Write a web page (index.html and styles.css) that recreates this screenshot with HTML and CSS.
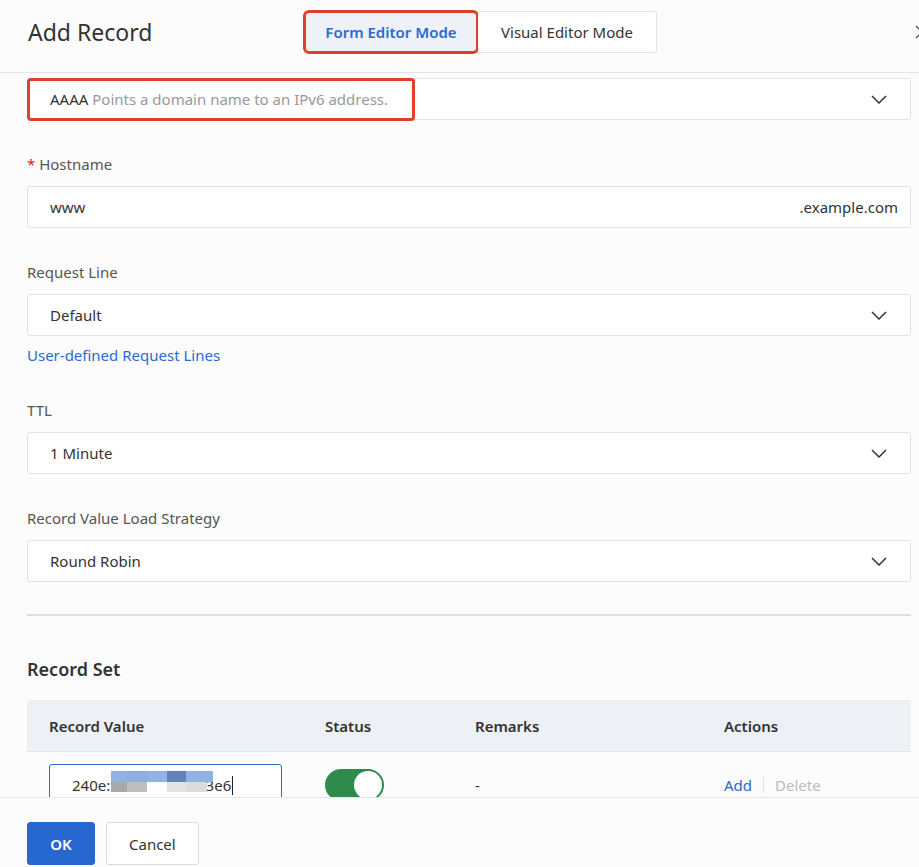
FILE: index.html
```html
<!DOCTYPE html>
<html lang="en">
<head>
  <meta charset="UTF-8">
  <meta name="viewport" content="width=device-width, initial-scale=1.0">
  <title>Add Record</title>
  <link rel="stylesheet" href="styles.css">
</head>
<body>

  <div class="dialog">
    <header class="dialog-head">
      <h1 class="dialog-title">Add Record</h1>
      <div class="mode-switch">
        <button class="mode-btn active">Form Editor Mode</button>
        <button class="mode-btn">Visual Editor Mode</button>
      </div>
      <button class="close-btn" aria-label="Close">
        <svg width="14" height="14" viewBox="0 0 14 14"><path d="M1 1 L13 13 M13 1 L1 13" stroke="#555" stroke-width="1.4" fill="none"/></svg>
      </button>
    </header>

    <div class="dialog-body">
      <div class="form">

        <div class="field">
          <div class="select">
            <span class="value">AAAA <span class="hint">Points a domain name to an IPv6 address.</span></span>
            <svg class="chevron" width="16" height="9" viewBox="0 0 16 9"><path d="M1 1 L8 8 L15 1" stroke="#333" stroke-width="1.5" fill="none"/></svg>
            <span class="mark"></span>
          </div>
        </div>

        <div class="field">
          <label class="label"><span class="req">*</span> Hostname</label>
          <div class="input">
            <span class="value">www</span>
            <span class="suffix">.example.com</span>
          </div>
        </div>

        <div class="field">
          <label class="label">Request Line</label>
          <div class="select">
            <span class="value">Default</span>
            <svg class="chevron" width="16" height="9" viewBox="0 0 16 9"><path d="M1 1 L8 8 L15 1" stroke="#333" stroke-width="1.5" fill="none"/></svg>
          </div>
          <a class="link" href="#">User-defined Request Lines</a>
        </div>

        <div class="field">
          <label class="label">TTL</label>
          <div class="select">
            <span class="value">1 Minute</span>
            <svg class="chevron" width="16" height="9" viewBox="0 0 16 9"><path d="M1 1 L8 8 L15 1" stroke="#333" stroke-width="1.5" fill="none"/></svg>
          </div>
        </div>

        <div class="field">
          <label class="label">Record Value Load Strategy</label>
          <div class="select">
            <span class="value">Round Robin</span>
            <svg class="chevron" width="16" height="9" viewBox="0 0 16 9"><path d="M1 1 L8 8 L15 1" stroke="#333" stroke-width="1.5" fill="none"/></svg>
          </div>
        </div>

        <hr class="divider">

        <h2 class="section-title">Record Set</h2>

        <div class="table">
          <div class="tr th">
            <div>Record Value</div>
            <div>Status</div>
            <div>Remarks</div>
            <div>Actions</div>
          </div>
          <div class="tr td">
            <div>
              <div class="input focused">
                <span class="value">240e:<span class="masked">xxxxxxxxxxxxx</span>3e6</span><span class="caret"></span>
                <span class="mosaic">
                  <span class="mosaic-row">
                    <i style="width:16px;background:#93b2e4"></i><i style="width:20px;background:#8fadde"></i><i style="width:20px;background:#93b2e4"></i><i style="width:19px;background:#6381b5"></i><i style="width:27px;background:#93b2e4"></i>
                  </span>
                  <span class="mosaic-row low">
                    <i style="width:16px;background:#a9a9a9"></i><i style="width:20px;background:#bdbdbd"></i><i style="width:20px;background:#fdfdfd"></i><i style="width:19px;background:#e3e3e3"></i><i style="width:21px;background:#dcdcdc"></i>
                  </span>
                </span>
              </div>
            </div>
            <div><span class="switch on"><span class="knob"></span></span></div>
            <div>-</div>
            <div class="actions"><a href="#" class="act">Add</a><span class="sep"></span><span class="act disabled">Delete</span></div>
          </div>
        </div>

      </div>
    </div>

    <footer class="dialog-foot">
      <button class="btn primary">OK</button>
      <button class="btn">Cancel</button>
    </footer>
  </div>

</body>
</html>
```

FILE: styles.css
```css
:root {
  --text: #333;
  --muted: #555;
  --hint: #999;
  --border: #e3e3e3;
  --blue: #2a6ad2;
  --mark: #e0402b;
  --bg: #fcfcfc;
}

* {
  box-sizing: border-box;
}

body {
  margin: 0;
  font-family: 'Noto Sans', 'Open Sans', sans-serif;
  font-size: 15px;
  color: var(--text);
  background: var(--bg);
  overflow: hidden;
}

.dialog {
  width: 919px;
  height: 867px;
  display: flex;
  flex-direction: column;
  overflow: hidden;
}

/* header */
.dialog-head {
  height: 73px;
  flex: 0 0 73px;
  display: flex;
  align-items: center;
  padding-left: 28px;
  padding-bottom: 8px;
  border-bottom: 1px solid var(--border);
}

.dialog-title {
  width: 276px;
  margin: 0;
  font-size: 23px;
  font-weight: 400;
  color: #333;
}

.mode-switch {
  display: flex;
  height: 42px;
}

.mode-btn {
  font-family: inherit;
  font-size: 15px;
  color: #333;
  background: #fff;
  border: 1px solid var(--border);
  padding: 0;
  height: 42px;
  cursor: pointer;
}

.mode-btn:first-child {
  width: 174px;
  border-radius: 3px 0 0 3px;
}

.mode-btn:last-child {
  width: 179px;
  border-left: none;
  border-radius: 0 3px 3px 0;
}

.mode-btn.active {
  background: #eef1f7;
  color: var(--blue);
  font-weight: 600;
  outline: 3px solid var(--mark);
  outline-offset: -2px;
  border-radius: 5px;
}

.close-btn {
  margin-left: auto;
  margin-right: -10px;
  background: none;
  border: none;
  padding: 0;
  width: 14px;
  height: 14px;
}

/* scrolling body */
.dialog-body {
  height: 724px;
  flex: 0 0 724px;
  overflow: hidden;
}

.form {
  padding: 5px 8px 0 27px;
}

.field {
  margin-bottom: 33px;
}

.label {
  display: block;
  height: 22px;
  line-height: 22px;
  margin-bottom: 11px;
  font-size: 15px;
  color: var(--muted);
}

.req {
  color: #e02020;
}

.select,
.input {
  position: relative;
  height: 42px;
  display: flex;
  align-items: center;
  padding: 0 22px;
  background: #fff;
  border: 1px solid var(--border);
  border-radius: 3px;
}

.chevron {
  margin-left: auto;
  margin-right: 1px;
}

.hint {
  color: var(--hint);
}

.mark {
  position: absolute;
  left: -1px;
  top: -1px;
  width: 388px;
  height: 43px;
  border: 3px solid var(--mark);
  border-radius: 4px;
}

.suffix {
  margin-left: auto;
  margin-right: -10px;
}

.link {
  display: block;
  margin-top: 8px;
  line-height: 22px;
  color: var(--blue);
  text-decoration: none;
}

.divider {
  margin: 0;
  margin-top: -1px;
  border: none;
  height: 2px;
  background: #dedede;
}

.section-title {
  margin: 42px 0 0;
  height: 22px;
  line-height: 22px;
  font-size: 18px;
  font-weight: 600;
  color: #333;
}

/* record table */
.table {
  margin-top: 20px;
}

.tr {
  display: grid;
  grid-template-columns: 276px 150px 249px 1fr;
  padding-left: 22px;
  align-items: center;
}

.th {
  height: 52px;
  background: #edf0f5;
  border-bottom: 1px solid #e2e4e8;
  border-radius: 3px 3px 0 0;
  font-weight: 600;
}

.td {
  padding-top: 12px;
  align-items: start;
}

.td > div:nth-child(3),
.td > div:nth-child(4) {
  padding-top: 11px;
}

.input.focused {
  width: 233px;
  border-color: var(--blue);
  padding-left: 22px;
}

.masked {
  color: transparent;
  letter-spacing: -0.6px;
}

.caret {
  display: inline-block;
  width: 1px;
  height: 19px;
  background: #222;
  margin-left: 1px;
}

.mosaic {
  position: absolute;
  left: 61px;
  top: 6px;
  display: flex;
  flex-direction: column;
}

.mosaic-row {
  display: flex;
  height: 11px;
}

.mosaic-row.low {
  height: 10px;
}

.mosaic-row i {
  display: block;
}

.switch {
  display: inline-block;
  width: 59px;
  height: 32px;
  margin-top: 5px;
  border-radius: 16px;
  background: #2e8b4b;
  position: relative;
}

.knob {
  position: absolute;
  right: 2px;
  top: 2px;
  width: 28px;
  height: 28px;
  border-radius: 50%;
  background: #fff;
}

.actions {
  display: flex;
  align-items: center;
}

.act {
  color: var(--blue);
  text-decoration: none;
}

.act.disabled {
  color: #bbb;
}

.sep {
  width: 1px;
  height: 16px;
  background: #e0e0e0;
  margin: 0 11px;
}

/* footer */
.dialog-foot {
  flex: 1;
  position: relative;
  z-index: 1;
  background: var(--bg);
  border-top: 1px solid #e6e6e6;
  display: flex;
  gap: 11px;
  padding: 24px 27px 0;
}

.btn {
  height: 43px;
  padding: 0 22px;
  font-family: inherit;
  font-size: 15px;
  color: #333;
  background: #fff;
  border: 1px solid #dcdcdc;
  border-radius: 3px;
}

.btn.primary {
  width: 68px;
  padding: 0;
  background: #2767d0;
  border-color: #2767d0;
  color: #fff;
  font-weight: 600;
}
```
